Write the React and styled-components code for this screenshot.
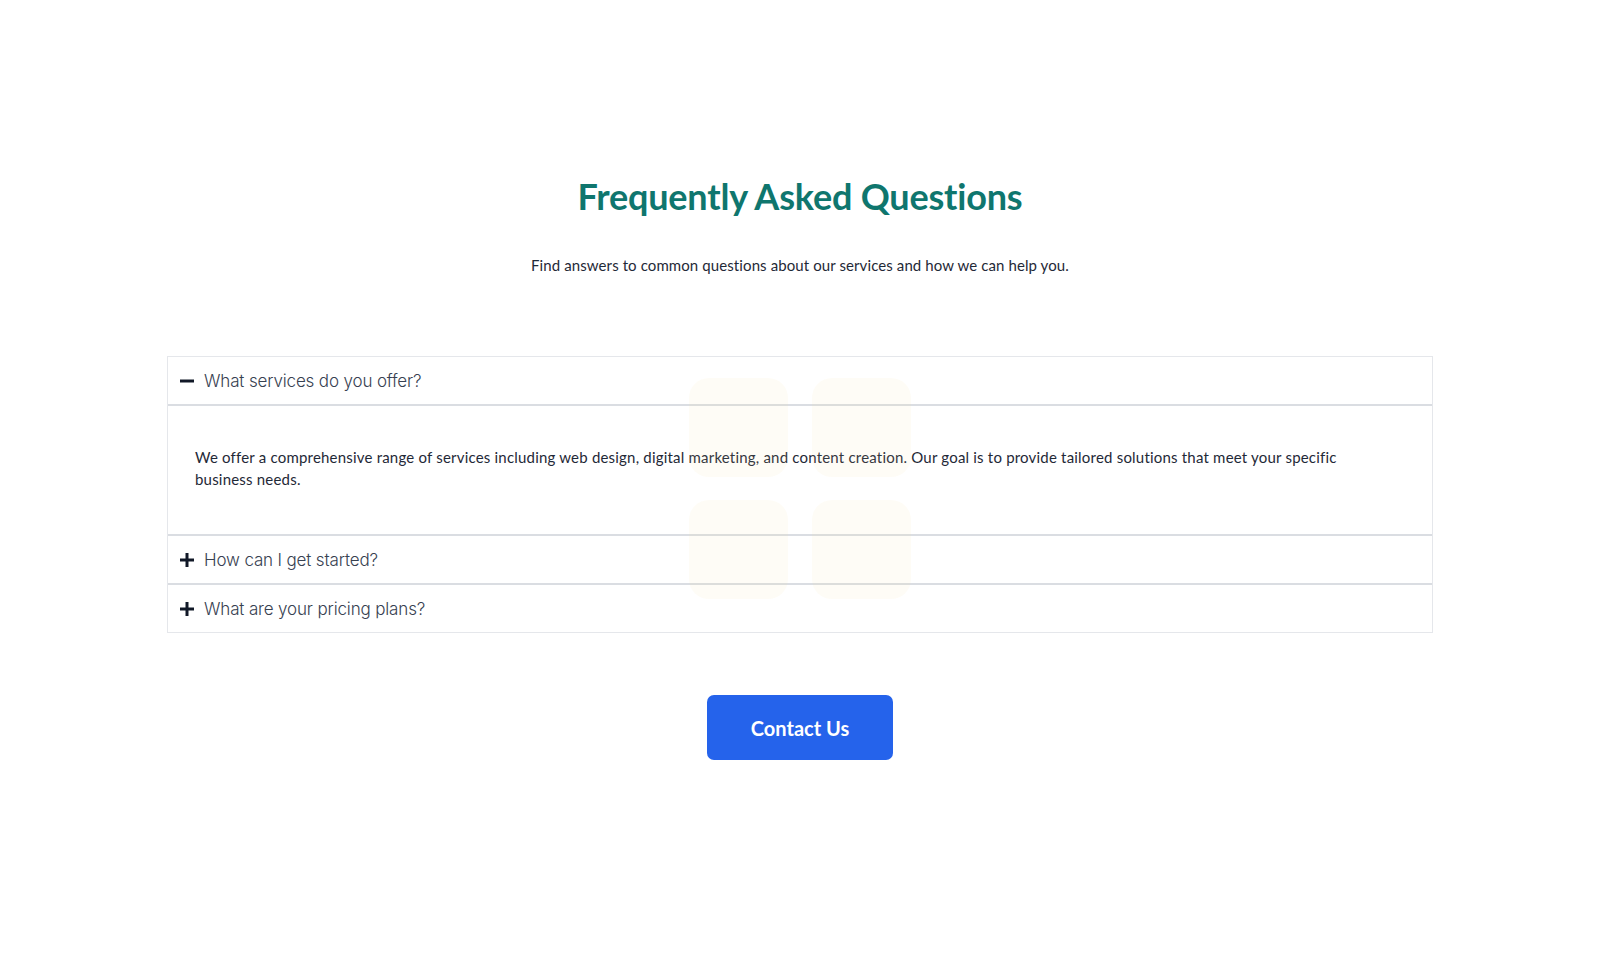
import React, {useState} from 'react'
import styled, {createGlobalStyle} from 'styled-components'

const GlobalStyle = createGlobalStyle`
  body {
    margin: 0;
    background: #ffffff;
    font-family: 'Lato', 'Noto Sans', sans-serif;
    color: #1f2937;
  }
`

const Section = styled.section`
  position: relative;
  display: flex;
  flex-direction: column;
  align-items: center;
  padding: 174px 0 120px;
`

const Title = styled.h2`
  margin: 0;
  font-size: 36px;
  line-height: 44px;
  font-weight: 700;
  color: #0f766e;
  letter-spacing: -0.2px;
`

const Subtitle = styled.p`
  margin: 36px 0 0;
  font-size: 15px;
  line-height: 22px;
  letter-spacing: 0.1px;
  color: #1f2937;
`

const Decor = styled.div`
  position: absolute;
  top: 378px;
  left: 50%;
  transform: translateX(-50%);
  display: grid;
  grid-template-columns: 99px 99px;
  grid-auto-rows: 99px;
  gap: 23px 24px;
  pointer-events: none;
  z-index: 1;
`

const Tile = styled.div`
  border-radius: 20px;
  background: rgba(245, 225, 150, 0.09);
`

const Accordion = styled.div`
  width: 1266px;
  margin-top: 80px;
  border: 1px solid #e5e7eb;
  box-sizing: border-box;
  background: #ffffff;
`

const Item = styled.div`
  & + & {
    border-top: 2px solid #dadde2;
  }
`

const Header = styled.button`
  display: flex;
  align-items: center;
  gap: 9px;
  height: 47px;
  width: calc(100% - 22px);
  padding: 0 11px;
  border: none;
  background: transparent;
  cursor: pointer;
  font-family: 'Inter', 'Lato', sans-serif;
  font-size: 17px;
  font-weight: 300;
  letter-spacing: -0.15px;
  color: #374151;
  text-align: left;
  border-bottom: ${p => (p.$open ? '2px solid #dadde2' : 'none')};
  box-sizing: content-box;
`

const Panel = styled.div`
  padding: 40px 28px 44px 27px;
  font-size: 15px;
  line-height: 22px;
  color: #1f2937;
`

const Answer = styled.p`
  margin: 0;
  max-width: 1160px;
  letter-spacing: 0.2px;
`

const ButtonRow = styled.div`
  margin-top: 62px;
`

const ContactButton = styled.button`
  width: 186px;
  height: 65px;
  border: none;
  border-radius: 7px;
  background: #2563eb;
  color: #ffffff;
  font-family: 'Lato', sans-serif;
  font-size: 20px;
  font-weight: 700;
  cursor: pointer;
`

const Sign = ({open}) => (
  <svg width="16" height="16" viewBox="0 0 16 16">
    <line x1="1" y1="8" x2="15" y2="8" stroke="#111827" strokeWidth="3"/>
    {!open && <line x1="8" y1="1" x2="8" y2="15" stroke="#111827" strokeWidth="3"/>}
  </svg>
)

const faqs = [
  {
    q: 'What services do you offer?',
    a: 'We offer a comprehensive range of services including web design, digital marketing, and content creation. Our goal is to provide tailored solutions that meet your specific business needs.'
  },
  {
    q: 'How can I get started?',
    a: 'Simply reach out through our contact form and our team will get back to you within one business day.'
  },
  {
    q: 'What are your pricing plans?',
    a: 'We offer flexible pricing plans tailored to the size and scope of your project.'
  }
]

export default function App() {
  const [open, setOpen] = useState(0)

  return (
    <>
      <GlobalStyle/>
      <Section>
        <Title>Frequently Asked Questions</Title>
        <Subtitle>Find answers to common questions about our services and how we can help you.</Subtitle>
        <Decor>
          <Tile/><Tile/><Tile/><Tile/>
        </Decor>
        <Accordion>
          {faqs.map((f, i) => (
            <Item key={f.q}>
              <Header $open={open === i} onClick={() => setOpen(open === i ? -1 : i)}>
                <Sign open={open === i}/>
                {f.q}
              </Header>
              {open === i && (
                <Panel>
                  <Answer>{f.a}</Answer>
                </Panel>
              )}
            </Item>
          ))}
        </Accordion>
        <ButtonRow>
          <ContactButton>Contact Us</ContactButton>
        </ButtonRow>
      </Section>
    </>
  )
}
